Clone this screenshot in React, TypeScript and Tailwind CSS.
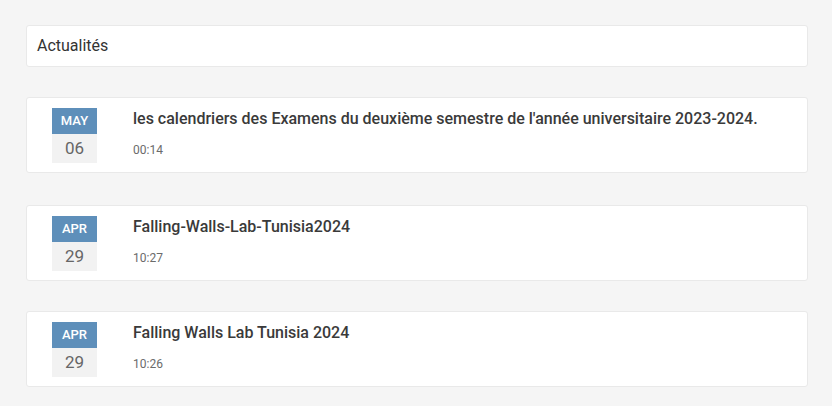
import React from 'react';

type NewsItem = {
  month: string;
  day: string;
  title: string;
  time: string;
  gap: string;
};

const news: NewsItem[] = [
  {
    month: 'MAY',
    day: '06',
    title: "les calendriers des Examens du deuxième semestre de l'année universitaire 2023-2024.",
    time: '00:14',
    gap: 'mt-[30px]',
  },
  { month: 'APR', day: '29', title: 'Falling-Walls-Lab-Tunisia2024', time: '10:27', gap: 'mt-[32px]' },
  { month: 'APR', day: '29', title: 'Falling Walls Lab Tunisia 2024', time: '10:26', gap: 'mt-[30px]' },
];

const App: React.FC = () => {
  return (
    <div className="min-h-[406px] bg-[#f5f5f5] pl-[26px] pr-[24px] pt-[25px] pb-[19px] font-['Roboto',sans-serif]">
      {/* Header */}
      <div className="h-[42px] bg-white border border-[#e9e9e9] rounded-[3px] flex items-center px-[10px]">
        <h2 className="text-[16px] text-[#333] font-normal">Actualités</h2>
      </div>

      {/* News list */}
      <div className="flex flex-col">
        {news.map((item, index) => (
          <div
            key={index}
            className={`${item.gap} h-[76px] bg-white border border-[#e9e9e9] rounded-[3px] flex items-start pl-[25px] pt-[10px]`}
          >
            <div className="w-[45px] shrink-0 text-center">
              <div className="h-[26px] bg-[#5e8fba] text-white text-[13px] font-medium leading-[26px]">
                {item.month}
              </div>
              <div className="h-[29px] bg-[#f2f2f2] text-[#666] text-[17px] leading-[29px]">{item.day}</div>
            </div>
            <div className="ml-[36px] pt-[1px]">
              <p className="text-[16px] text-[#3a3a3a] font-medium leading-[20px]">{item.title}</p>
              <p className="mt-[14px] text-[12px] text-[#6b6b6b] leading-[14px]">{item.time}</p>
            </div>
          </div>
        ))}
      </div>
    </div>
  );
};

export default App;
